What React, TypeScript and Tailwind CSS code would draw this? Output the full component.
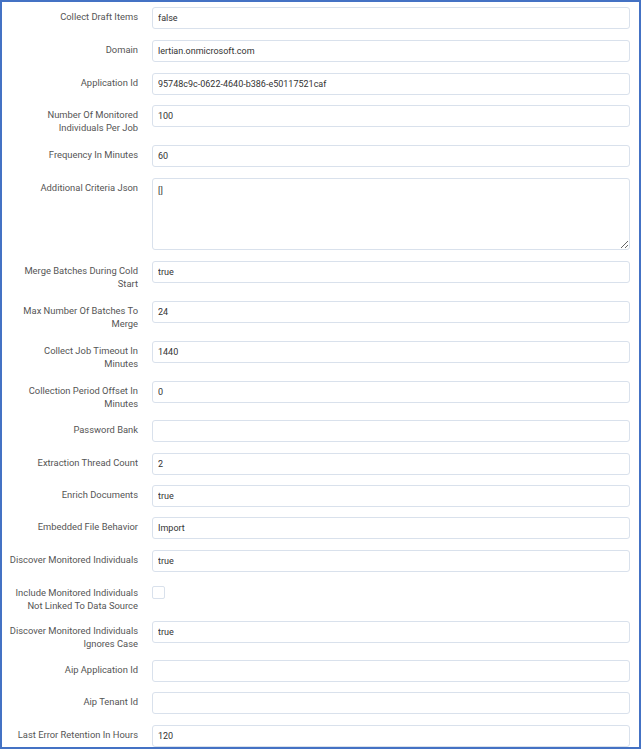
import React from "react";

type Field = {
  label: string;
  value?: string;
  kind?: "input" | "textarea" | "checkbox";
  rowClass: string;
};

// labels break where the original form breaks them
const fields: Field[] = [
  { label: "Collect Draft Items", value: "false", rowClass: "h-[33px]" },
  { label: "Domain", value: "lertian.onmicrosoft.com", rowClass: "h-[33px]" },
  { label: "Application Id", value: "95748c9c-0622-4640-b386-e50117521caf", rowClass: "h-[32px]" },
  { label: "Number Of Monitored\nIndividuals Per Job", value: "100", rowClass: "h-[40px]" },
  { label: "Frequency In Minutes", value: "60", rowClass: "h-[33px]" },
  { label: "Additional Criteria Json", value: "[]", kind: "textarea", rowClass: "h-[83px]" },
  { label: "Merge Batches During Cold\nStart", value: "true", rowClass: "h-[40px]" },
  { label: "Max Number Of Batches To\nMerge", value: "24", rowClass: "h-[40px]" },
  { label: "Collect Job Timeout In\nMinutes", value: "1440", rowClass: "h-[40px]" },
  { label: "Collection Period Offset In\nMinutes", value: "0", rowClass: "h-[39px]" },
  { label: "Password Bank", value: "", rowClass: "h-[33px]" },
  { label: "Extraction Thread Count", value: "2", rowClass: "h-[32px]" },
  { label: "Enrich Documents", value: "true", rowClass: "h-[32px]" },
  { label: "Embedded File Behavior", value: "Import", rowClass: "h-[33px]" },
  { label: "Discover Monitored Individuals", value: "true", rowClass: "h-[33px]" },
  { label: "Include Monitored Individuals\nNot Linked To Data Source", kind: "checkbox", rowClass: "h-[38px]" },
  { label: "Discover Monitored Individuals\nIgnores Case", value: "true", rowClass: "h-[39px]" },
  { label: "Aip Application Id", value: "", rowClass: "h-[32px]" },
  { label: "Aip Tenant Id", value: "", rowClass: "h-[33px]" },
  { label: "Last Error Retention In Hours", value: "120", rowClass: "h-[22px]" },
];

const labelClass =
  "ml-[2px] w-[134px] shrink-0 whitespace-pre-line text-right pt-[4px] text-[9.4px] leading-[12.5px] text-[#555]";

const FieldRow: React.FC<{ field: Field }> = ({ field }) => {
  let control: React.ReactNode;
  if (field.kind === "textarea") {
    control = (
      <textarea
        defaultValue={field.value}
        className="flex-1 h-[72px] border border-[#d9e1ec] rounded-[3px] bg-white px-[5px] py-[5px] text-[9px] leading-[12px] text-[#333] outline-none"
      />
    );
  } else if (field.kind === "checkbox") {
    return (
      <div className={`flex items-start ${field.rowClass}`}>
        <label className={labelClass}>{field.label}</label>
        <div className="ml-[14px] mt-[3px] w-[13px] h-[13px] border border-[#d9e1ec] rounded-[2px] bg-white" />
      </div>
    );
  } else {
    control = (
      <input
        type="text"
        defaultValue={field.value}
        className="flex-1 h-[22px] border border-[#d9e1ec] rounded-[3px] bg-white px-[5px] text-[9px] text-[#333] outline-none"
      />
    );
  }

  return (
    <div className={`flex items-start ${field.rowClass}`}>
      <label className={labelClass}>{field.label}</label>
      <div className="ml-[14px] flex flex-1">{control}</div>
    </div>
  );
};

export default function App() {
  return (
    <div className="bg-white" style={{ fontFamily: "Roboto, 'Liberation Sans', sans-serif" }}>
      <div className="w-[641px] h-[749px] border-2 border-[#4472c4] pt-[5px] pr-[9px] overflow-hidden">
        {fields.map((f) => (
          <FieldRow key={f.label} field={f} />
        ))}
      </div>
    </div>
  );
}
